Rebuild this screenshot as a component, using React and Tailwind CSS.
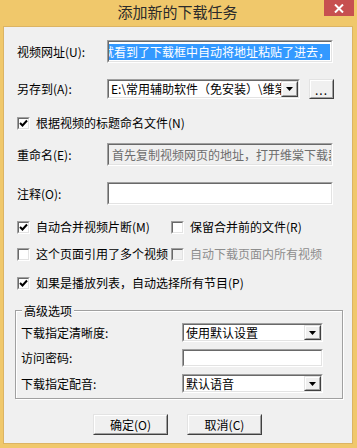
const Sunken = ({ className = "", inner = "bg-white", children }) => (
  <div className={`shrink-0 border border-t-[#a0a0a0] border-l-[#a0a0a0] border-b-white border-r-white ${className}`}>
    <div className={`flex h-full w-full items-center overflow-hidden border border-t-[#696969] border-l-[#696969] border-b-[#e3e3e3] border-r-[#e3e3e3] ${inner}`}>
      {children}
    </div>
  </div>
);

const Raised = ({ className = "", children }) => (
  <div className={`shrink-0 border border-t-[#e3e3e3] border-l-[#e3e3e3] border-b-[#404040] border-r-[#404040] bg-[#f0f0f0] ${className}`}>
    <div className="flex h-full w-full items-center justify-center border border-t-white border-l-white border-b-[#a0a0a0] border-r-[#a0a0a0]">
      {children}
    </div>
  </div>
);

const Arrow = () => (
  <Raised className="h-full w-[17px]">
    <svg width="7" height="4" viewBox="0 0 7 4">
      <polygon points="0,0 7,0 3.5,4" fill="#000" />
    </svg>
  </Raised>
);

const Check = ({ checked, disabled }) => (
  <span className="flex h-[13px] w-[13px] shrink-0 border border-t-[#a0a0a0] border-l-[#a0a0a0] border-b-white border-r-white">
    <span
      className={`flex h-full w-full items-center justify-center border border-t-[#696969] border-l-[#696969] border-b-[#e3e3e3] border-r-[#e3e3e3] ${
        disabled ? "bg-[#f0f0f0]" : "bg-white"
      }`}
    >
      {checked && (
        <svg width="9" height="9" viewBox="0 0 9 9">
          <path d="M1 4 L3.5 6.5 L8 1.5" stroke="#000" strokeWidth="2" fill="none" />
        </svg>
      )}
    </span>
  </span>
);

const CheckRow = ({ checked, disabled, children, className = "" }) => (
  <label className={`flex items-center gap-[6px] whitespace-nowrap ${className}`}>
    <Check checked={checked} disabled={disabled} />
    <span className={disabled ? "text-[#8d8d8d]" : "text-black"}>{children}</span>
  </label>
);

const Label = ({ w = "w-[90px]", children }) => (
  <span className={`shrink-0 whitespace-nowrap ${w}`}>{children}</span>
);

const App = () => {
  return (
    <div className="flex h-[448px] w-[357px] flex-col overflow-hidden bg-[#f0c86b] font-['Noto_Sans_CJK_SC','Liberation_Sans',sans-serif] text-[12px] leading-none text-black">
      {/* title bar */}
      <div className="flex h-[26px] shrink-0 items-start">
        <div className="flex h-[23px] flex-1 items-center justify-center pl-[31px] text-[15px] text-[#2b2b2b]">
          添加新的下载任务
        </div>
        <div className="mr-[3px] flex h-[16px] w-[30px] items-center justify-center bg-[#c75050]">
          <svg width="10" height="9" viewBox="0 0 10 9">
            <path d="M1 0.5 L9 8.5 M9 0.5 L1 8.5" stroke="#fff" strokeWidth="2" />
          </svg>
        </div>
      </div>

      {/* client area */}
      <div className="ml-[3px] flex h-[418px] w-[350px] flex-col bg-[#f0f0f0] pl-[14px] shadow-[inset_0_0_0_1px_#dcb463]">
        <div className="mt-[14px] flex h-[23px] items-center">
          <Label>视频网址(U):</Label>
          <Sunken className="h-full w-[226px]">
            <div className="flex h-full w-full items-center justify-end overflow-hidden whitespace-nowrap pr-[1px]">
              <span className="bg-[#3399ff] py-[2px] text-white">
                首先复制视频网页的地址，打开维棠下载器，就看到了下载框中自动将地址粘贴了进去，
              </span>
            </div>
          </Sunken>
        </div>

        <div className="mt-[16px] flex h-[20px] items-center">
          <Label>另存到(A):</Label>
          <Sunken className="h-full w-[193px]">
            <span className="min-w-0 flex-1 overflow-hidden whitespace-nowrap pl-[2px]">E:\常用辅助软件（免安装）\维棠下载器\</span>
            <Arrow />
          </Sunken>
          <Raised className="ml-[9px] h-full w-[25px]">
            <span className="mt-[2px] tracking-[1px]">...</span>
          </Raised>
        </div>

        <CheckRow checked className="mt-[16px] h-[16px]">
          根据视频的标题命名文件(N)
        </CheckRow>

        <div className="mt-[12px] flex h-[23px] items-center">
          <Label>重命名(E):</Label>
          <Sunken className="h-full w-[226px]" inner="bg-[#f0f0f0]">
            <span className="overflow-hidden whitespace-nowrap pl-[3px] text-[#6d6d6d]">
              首先复制视频网页的地址，打开维棠下载器，就看到了
            </span>
          </Sunken>
        </div>

        <div className="mt-[16px] flex h-[23px] items-center">
          <Label>注释(O):</Label>
          <Sunken className="h-full w-[226px]" />
        </div>

        <div className="mt-[14px] flex h-[16px] items-center">
          <CheckRow checked className="w-[154px]">
            自动合并视频片断(M)
          </CheckRow>
          <CheckRow>保留合并前的文件(R)</CheckRow>
        </div>

        <div className="mt-[11px] flex h-[16px] items-center">
          <CheckRow className="w-[154px]">这个页面引用了多个视频</CheckRow>
          <CheckRow disabled>自动下载页面内所有视频</CheckRow>
        </div>

        <CheckRow checked className="mt-[13px] h-[16px]">
          如果是播放列表，自动选择所有节目(P)
        </CheckRow>

        {/* group box */}
        <div className="relative ml-[-2px] mt-[19px] h-[89px] w-[328px] border border-[#a0a0a0] pl-[5px] shadow-[inset_1px_1px_0_#fff,1px_1px_0_#fff]">
          <span className="absolute left-[6px] top-[-8px] bg-[#f0f0f0] px-[2px] leading-[16px]">高级选项</span>
          <div className="mt-[12px] flex h-[19px] items-center">
            <Label w="w-[161px]">下载指定清晰度:</Label>
            <Sunken className="h-full w-[141px]">
              <span className="flex-1 pl-[2px]">使用默认设置</span>
              <Arrow />
            </Sunken>
          </div>
          <div className="mt-[7px] flex h-[18px] items-center">
            <Label w="w-[161px]">访问密码:</Label>
            <Sunken className="h-full w-[141px]" />
          </div>
          <div className="mt-[7px] flex h-[19px] items-center">
            <Label w="w-[161px]">下载指定配音:</Label>
            <Sunken className="h-full w-[141px]">
              <span className="flex-1 pl-[2px]">默认语音</span>
              <Arrow />
            </Sunken>
          </div>
        </div>

        <div className="ml-[76px] mt-[15px] flex h-[21px] gap-[19px]">
          <Raised className="h-full w-[75px]">确定(O)</Raised>
          <Raised className="h-full w-[75px]">取消(C)</Raised>
        </div>
      </div>
    </div>
  );
};

export default App;
